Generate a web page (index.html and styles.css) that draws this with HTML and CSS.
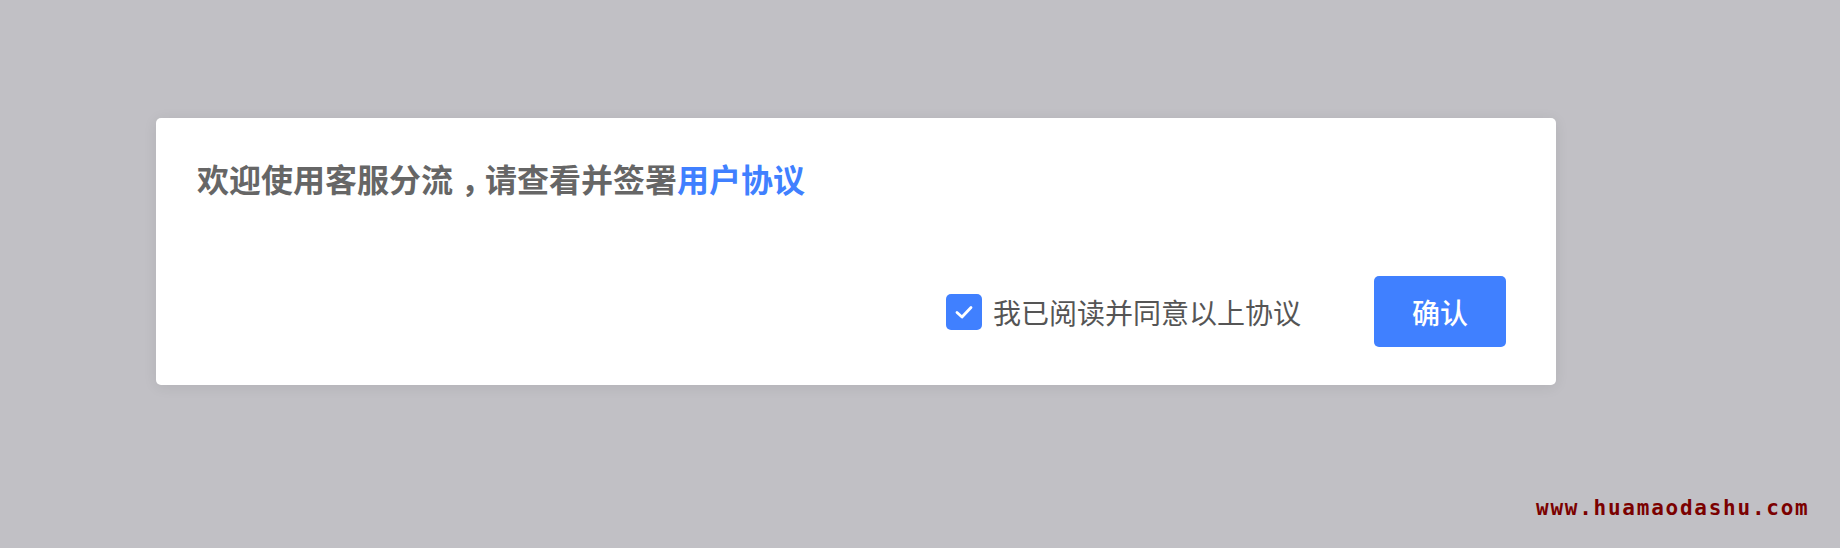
FILE: index.html
```html
<!DOCTYPE html>
<html lang="zh-CN">
<head>
    <meta charset="UTF-8">
    <meta name="viewport" content="width=device-width, initial-scale=1.0">
    <title>用户协议</title>
    <link rel="stylesheet" href="styles.css">
</head>
<body>
    <div class="dialog">
        <h2 class="dialog-title">欢迎使用客服分流<span class="punct">，</span>请查看并签署<a href="#">用户协议</a></h2>
        <div class="dialog-footer">
            <label class="agree">
                <span class="check">
                    <svg width="36" height="36" viewBox="0 0 36 36">
                        <path d="M11 18.5 L16 23 L25 13.5" fill="none" stroke="#ffffff" stroke-width="2.8" stroke-linecap="round" stroke-linejoin="round"/>
                    </svg>
                </span>
                <span class="agree-text">我已阅读并同意以上协议</span>
            </label>
            <button class="confirm">确认</button>
        </div>
    </div>
    <div class="watermark">www.huamaodashu.com</div>
</body>
</html>
```

FILE: styles.css
```css
body {
    margin: 0;
    padding: 118px 0 0 156px;
    height: 548px;
    box-sizing: border-box;
    background-color: #c1c0c5;
    font-family: "Noto Sans CJK SC", "Noto Sans", sans-serif;
    overflow: hidden;
}
.dialog {
    width: 1400px;
    height: 267px;
    box-sizing: border-box;
    padding: 38px 50px 38px 41px;
    background: #ffffff;
    border-radius: 5px;
    box-shadow: 0 2px 14px rgba(0, 0, 0, 0.08);
    display: flex;
    flex-direction: column;
    justify-content: space-between;
}
.dialog-title {
    margin: 0;
    font-size: 32px;
    line-height: 44px;
    font-weight: 700;
    color: #666666;
}
.dialog-title .punct {
    padding-left: 8px;
    letter-spacing: -8px;
}
.dialog-title a {
    color: #4080ff;
    text-decoration: none;
}
.dialog-footer {
    display: flex;
    justify-content: flex-end;
    align-items: center;
}
.agree {
    display: flex;
    align-items: center;
    gap: 11px;
    margin-right: 73px;
}
.check {
    width: 36px;
    height: 36px;
    border-radius: 5px;
    background: #4080ff;
    display: flex;
    align-items: center;
    justify-content: center;
}
.agree-text {
    font-size: 28px;
    color: #555555;
}
.confirm {
    width: 132px;
    height: 71px;
    border: none;
    border-radius: 5px;
    background: #4080ff;
    color: #ffffff;
    font-family: inherit;
    font-size: 28px;
    font-weight: 500;
    cursor: pointer;
}
.watermark {
    position: absolute;
    left: 1536px;
    top: 496px;
    font-family: "DejaVu Sans Mono", monospace;
    font-size: 21px;
    font-weight: 700;
    letter-spacing: 1.75px;
    color: #7b0000;
}
```
